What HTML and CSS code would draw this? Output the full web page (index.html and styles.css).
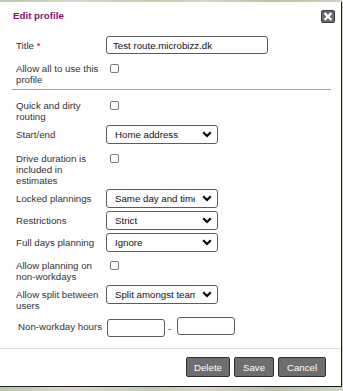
FILE: index.html
```html
<!DOCTYPE html>
<html lang="en">
<head>
    <meta charset="UTF-8">
    <meta name="viewport" content="width=device-width, initial-scale=1.0">
    <title>Edit profile</title>
    <link rel="stylesheet" href="styles.css">
</head>
<body>
    <div class="dialog">
        <div class="dialogHead">
            <span class="dialogTitle">Edit profile</span>
            <button class="closeBtn" title="Close">
                <svg width="12" height="11" viewBox="0 0 12 11">
                    <path d="M3.5 3 L8.5 8 M8.5 3 L3.5 8" stroke="#fff" stroke-width="2.4" stroke-linecap="square"/>
                </svg>
            </button>
        </div>
        <form class="profileForm">
            <label class="lbl lblInput">Title <span class="req">*</span></label>
            <div><input class="txt txtTitle" type="text" value="Test route.microbizz.dk"></div>

            <label class="lbl lblCheck">Allow all to use this profile</label>
            <div><input class="chk" type="checkbox"></div>

            <hr class="sep">

            <label class="lbl lblCheck">Quick and dirty routing</label>
            <div><input class="chk" type="checkbox"></div>

            <label class="lbl lblInput">Start/end</label>
            <div>
                <select class="sel">
                    <option>Home address</option>
                </select>
            </div>

            <label class="lbl lblCheck">Drive duration is included in estimates</label>
            <div><input class="chk" type="checkbox"></div>

            <label class="lbl lblInput">Locked plannings</label>
            <div>
                <select class="sel">
                    <option>Same day and time</option>
                </select>
            </div>

            <label class="lbl lblInput">Restrictions</label>
            <div>
                <select class="sel">
                    <option>Strict</option>
                </select>
            </div>

            <label class="lbl lblInput">Full days planning</label>
            <div>
                <select class="sel">
                    <option>Ignore</option>
                </select>
            </div>

            <label class="lbl lblCheck">Allow planning on non-workdays</label>
            <div><input class="chk" type="checkbox"></div>

            <label class="lbl lblInput">Allow split between users</label>
            <div>
                <select class="sel">
                    <option>Split amongst team</option>
                </select>
            </div>

            <label class="lbl lblHours">Non-workday hours</label>
            <div class="hours">
                <input class="txt txtHour txtFrom" type="text">
                <span class="dash">-</span>
                <input class="txt txtHour" type="text">
            </div>
        </form>
        <div class="dialogFoot">
            <button class="btn btnDelete">Delete</button>
            <button class="btn btnSave">Save</button>
            <button class="btn btnCancel">Cancel</button>
        </div>
    </div>
</body>
</html>
```

FILE: styles.css
```css
* {
    font-family: "Liberation Sans", Arial, sans-serif;
    box-sizing: border-box;
}
body {
    margin: 0;
    height: 391px;
    overflow: hidden;
    background: #c9d0bf;
    background-image: linear-gradient(90deg, #b9c7a6 0%, #d8d6cc 20%, #c3cdb3 45%, #d9d3c9 60%, #b7c4a4 80%, #cfd4c6 100%);
}
.dialog {
    margin-top: 2px;
    width: 342px;
    height: 385px;
    background: #fff;
    border-right: 1px solid #1e1e1e;
    border-bottom: 1px solid #1e1e1e;
    display: flex;
    flex-direction: column;
}
.dialogHead {
    height: 26px;
    display: flex;
    align-items: center;
    justify-content: space-between;
    padding: 0 6px 0 13px;
}
.dialogTitle {
    font-size: 9.75px;
    font-weight: bold;
    color: #7f1376;
}
.closeBtn {
    width: 14px;
    height: 13px;
    margin-top: 2px;
    padding: 0;
    border: 1px solid #3c3c3c;
    border-radius: 2px;
    background: #6b6b6b;
    display: flex;
    align-items: center;
    justify-content: center;
}
.profileForm {
    display: grid;
    grid-template-columns: 88px 1fr;
    column-gap: 2px;
    row-gap: 3px;
    align-items: start;
    align-content: start;
    padding: 8px 11px 0 16px;
    height: 320px;
}
.lbl {
    font-size: 9.7px;
    line-height: 11px;
    color: #333;
}
.lblInput {
    padding-top: 4px;
}
.lblCheck {
    padding-top: 5.5px;
}
.lblHours {
    padding: 7px 0 0 2px;
    white-space: nowrap;
}
.req {
    color: #d40000;
}
.chk {
    appearance: none;
    -webkit-appearance: none;
    width: 9px;
    height: 9px;
    margin: 6.5px 0 0 4px;
    border: 1px solid #7a7a7a;
    border-radius: 2px;
    background: #fff;
    display: block;
}
.txt {
    height: 18px;
    border: 1px solid #5c5c5c;
    border-radius: 3px;
    font-size: 9.7px;
    color: #111;
    padding: 0 6px;
    margin: 0;
    display: block;
}
.txtTitle {
    width: 162px;
}
.sep {
    grid-column: 1 / -1;
    margin: 1px -1px 2px -4px;
    border: none;
    border-top: 1px solid #a3a3a3;
    height: 0;
}
.sel {
    appearance: none;
    -webkit-appearance: none;
    display: block;
    width: 112px;
    height: 19px;
    margin: 0;
    padding: 0 22px 0 8px;
    border: 1px solid #5c5c5c;
    border-radius: 3px;
    background: #fff url("data:image/svg+xml,%3Csvg xmlns='http://www.w3.org/2000/svg' width='10' height='7' viewBox='0 0 10 7'%3E%3Cpath d='M1.2 1.3 L5 5 L8.8 1.3' fill='none' stroke='%23000' stroke-width='2.2'/%3E%3C/svg%3E") no-repeat right 5px center;
    font-size: 9.7px;
    color: #111;
    overflow: hidden;
    white-space: nowrap;
}
.hours {
    display: flex;
    align-items: flex-start;
    padding-top: 3px;
}
.txtHour {
    width: 58px;
    margin-left: 1px;
}
.txtFrom {
    margin-top: 2px;
}
.dash {
    font-size: 9.7px;
    color: #333;
    width: 11px;
    padding: 6px 0 0 3px;
}
.dialogFoot {
    border-top: 1px solid #dcdcdc;
    display: flex;
    justify-content: flex-end;
    gap: 4px;
    padding: 8px 15px 0 0;
}
.btn {
    height: 20px;
    padding: 0;
    border: 1px solid #2f2f2f;
    border-radius: 2px;
    background: #6e6e6e;
    color: #fff;
    font-size: 9.7px;
    text-align: center;
}
.btnDelete {
    width: 44px;
}
.btnSave {
    width: 40px;
}
.btnCancel {
    width: 48px;
}
```
